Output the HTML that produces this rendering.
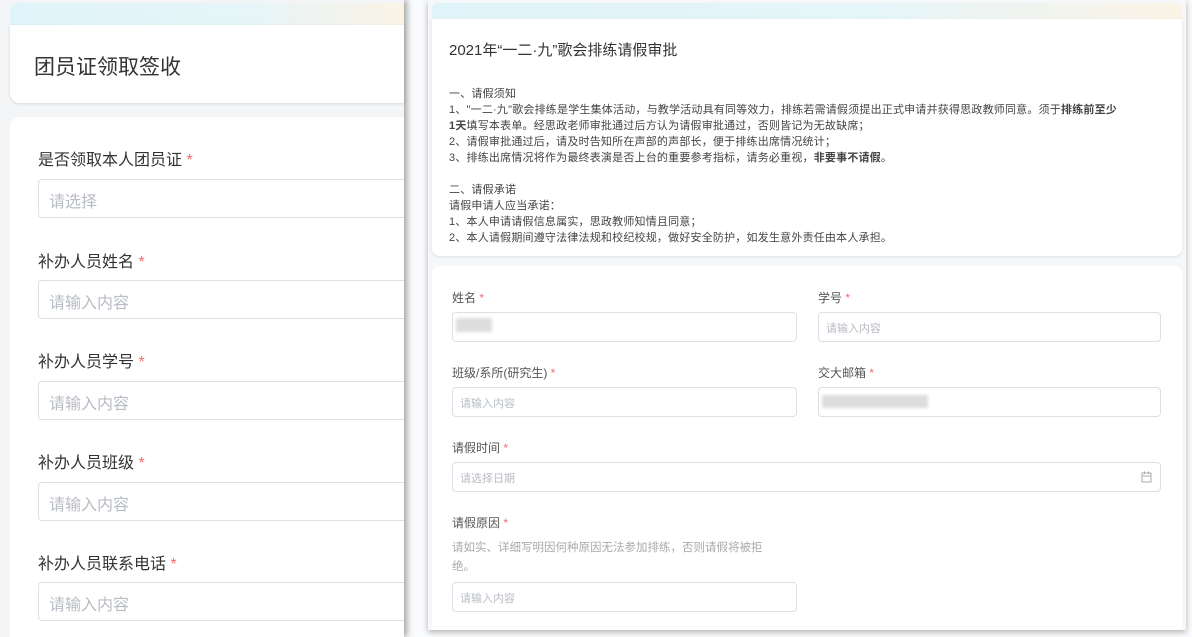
<!DOCTYPE html>
<html><head><meta charset="utf-8"><style>
*{box-sizing:border-box;margin:0;padding:0}
body{width:1192px;height:637px;background:#fafbfc;font-family:"Liberation Sans","Noto Sans CJK SC",sans-serif;position:relative;overflow:hidden}
.abs{position:absolute}
.lp{left:0;top:0;width:404px;height:637px;background:#f4f5f7;box-shadow:3px 0 6px rgba(0,0,0,.35)}
.card{background:#fff;border-radius:8px}
.strip{background:linear-gradient(90deg,#dff4fa,#e6f5f8 60%,#fbf3e6)}
.ll{font-size:16px;color:#333;left:38px}
.ll b,.rl b{color:#f56c6c;font-weight:normal}
.li{left:38px;width:366px;height:39px;border:1px solid #dcdfe6;border-right:none;border-radius:4px 0 0 4px;font-size:16px;color:#b8bcc4;padding:8px 10px;background:#fff}
.rp{left:428px;top:0;width:758px;height:630px;background:#f6f7f9;box-shadow:0 2px 6px rgba(0,0,0,.3)}
.rt{font-size:11px;color:#444;line-height:16px;letter-spacing:0.2px}
.rl{font-size:12px;color:#555}
.ri{height:30px;border:1px solid #dcdfe6;border-radius:4px;font-size:11px;color:#b8bcc4;padding:7px 7px;background:#fff}
.blur{background:#ddd;filter:blur(1.5px)}
</style></head><body>
<div class="abs lp">
 <div class="abs card strip" style="left:10px;top:3px;width:394px;height:30px;border-radius:8px 0 0 0"></div>
 <div class="abs card" style="left:10px;top:25px;width:394px;height:78px;border-radius:0 0 0 10px;box-shadow:0 1px 3px rgba(0,0,0,.12)"></div>
 <div class="abs" style="left:34px;top:51px;font-size:21px;color:#333">团员证领取签收</div>
 <div class="abs card" style="left:10px;top:117px;width:394px;height:520px;border-radius:10px 0 0 0"></div>
 <div class="abs ll" style="top:146px">是否领取本人团员证 <b>*</b></div>
 <div class="abs li" style="top:179px">请选择</div>
 <div class="abs ll" style="top:248px">补办人员姓名 <b>*</b></div>
 <div class="abs li" style="top:280px">请输入内容</div>
 <div class="abs ll" style="top:348px">补办人员学号 <b>*</b></div>
 <div class="abs li" style="top:381px">请输入内容</div>
 <div class="abs ll" style="top:449px">补办人员班级 <b>*</b></div>
 <div class="abs li" style="top:482px">请输入内容</div>
 <div class="abs ll" style="top:550px">补办人员联系电话 <b>*</b></div>
 <div class="abs li" style="top:582px">请输入内容</div>
</div>
<div class="abs rp">
 <div class="abs card strip" style="left:4px;top:3px;width:750px;height:20px;border-radius:6px 6px 0 0"></div>
 <div class="abs card" style="left:4px;top:19px;width:750px;height:237px;border-radius:0 0 8px 8px;box-shadow:0 1px 3px rgba(0,0,0,.1)"></div>
 <div class="abs" style="left:21px;top:39px;font-size:15px;color:#333">2021年“一二·九”歌会排练请假审批</div>
 <div class="abs rt" style="left:21px;top:86px;width:740px;white-space:nowrap">一、请假须知<br>1、"一二·九"歌会排练是学生集体活动，与教学活动具有同等效力，排练若需请假须提出正式申请并获得思政教师同意。须于<b>排练前至少</b><br><b>1天</b>填写本表单。经思政老师审批通过后方认为请假审批通过，否则皆记为无故缺席；<br>2、请假审批通过后，请及时告知所在声部的声部长，便于排练出席情况统计；<br>3、排练出席情况将作为最终表演是否上台的重要参考指标，请务必重视，<b>非要事不请假</b>。<br><br>二、请假承诺<br>请假申请人应当承诺：<br>1、本人申请请假信息属实，思政教师知情且同意；<br>2、本人请假期间遵守法律法规和校纪校规，做好安全防护，如发生意外责任由本人承担。</div>
 <div class="abs card" style="left:4px;top:266px;width:750px;height:364px;border-radius:8px 8px 0 0"></div>
 <div class="abs rl" style="left:24px;top:289px">姓名 <b>*</b></div>
 <div class="abs ri" style="left:24px;top:312px;width:345px"></div>
 <div class="abs blur" style="left:28px;top:318px;width:36px;height:14px"></div>
 <div class="abs rl" style="left:390px;top:289px">学号 <b>*</b></div>
 <div class="abs ri" style="left:390px;top:312px;width:343px">请输入内容</div>
 <div class="abs rl" style="left:24px;top:364px">班级/系所(研究生) <b>*</b></div>
 <div class="abs ri" style="left:24px;top:387px;width:345px">请输入内容</div>
 <div class="abs rl" style="left:390px;top:364px">交大邮箱 <b>*</b></div>
 <div class="abs ri" style="left:390px;top:387px;width:343px"></div>
 <div class="abs blur" style="left:394px;top:395px;width:106px;height:13px"></div>
 <div class="abs rl" style="left:24px;top:439px">请假时间 <b>*</b></div>
 <div class="abs ri" style="left:24px;top:462px;width:709px">请选择日期
  <svg class="abs" style="right:8px;top:8px" width="11" height="12" viewBox="0 0 11 12"><rect x="1" y="2" width="9" height="9" fill="none" stroke="#aaa"/><line x1="1" y1="5" x2="10" y2="5" stroke="#aaa"/><line x1="3.5" y1="0.5" x2="3.5" y2="3" stroke="#aaa"/><line x1="7.5" y1="0.5" x2="7.5" y2="3" stroke="#aaa"/></svg></div>
 <div class="abs rl" style="left:24px;top:514px">请假原因 <b>*</b></div>
 <div class="abs" style="left:24px;top:539px;width:330px;font-size:11.5px;color:#aaa;line-height:19px">请如实、详细写明因何种原因无法参加排练，否则请假将被拒绝。</div>
 <div class="abs ri" style="left:24px;top:582px;width:345px">请输入内容</div>
</div>
</body></html>
